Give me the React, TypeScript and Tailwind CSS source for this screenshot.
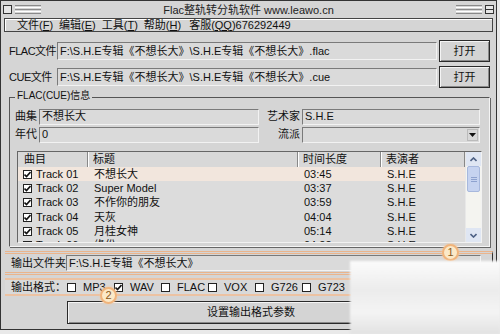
import React from "react";

const tracks = [
  { no: "Track 01", title: "不想长大", time: "03:45", artist: "S.H.E" },
  { no: "Track 02", title: "Super Model", time: "03:37", artist: "S.H.E" },
  { no: "Track 03", title: "不作你的朋友", time: "03:59", artist: "S.H.E" },
  { no: "Track 04", title: "天灰", time: "04:04", artist: "S.H.E" },
  { no: "Track 05", title: "月桂女神", time: "05:14", artist: "S.H.E" },
  { no: "Track 06", title: "缘份", time: "04:22", artist: "S.H.E" },
];

const formats = [
  { name: "MP3", checked: false },
  { name: "WAV", checked: true },
  { name: "FLAC", checked: false },
  { name: "VOX", checked: false },
  { name: "G726", checked: false },
  { name: "G723", checked: false },
];

const inset =
  "border border-t-[#7a7a7a] border-l-[#7a7a7a] border-b-[#f2f2f2] border-r-[#f2f2f2] bg-[#dadada]";

function Field({ value, className = "" }: { value: string; className?: string }) {
  return (
    <div className={`${inset} flex items-center px-[2px] text-[11px] leading-none text-[#111] whitespace-nowrap overflow-hidden ${className}`}>
      {value}
    </div>
  );
}

function Button({ label, className = "" }: { label: string; className?: string }) {
  return (
    <div
      className={`flex items-center justify-center border border-[#2a2a2a] shadow-[inset_1px_1px_0_#f4f4f4,inset_-1px_-1px_0_#8a8a8a] bg-[#d4d4d4] text-[11px] text-[#111] ${className}`}
    >
      {label}
    </div>
  );
}

function Check({ checked }: { checked: boolean }) {
  return (
    <div className="w-[9px] h-[9px] shrink-0 border border-[#222] bg-white flex items-center justify-center">
      {checked && (
        <svg width="7" height="7" viewBox="0 0 7 7">
          <path d="M0.5 3.5 L2.5 5.5 L6.5 1" stroke="#111" strokeWidth="1.6" fill="none" />
        </svg>
      )}
    </div>
  );
}

function Stripes() {
  return (
    <div className="flex flex-col gap-[1px] w-[26px]">
      <div className="h-[1px] bg-[#8a8a8a]" />
      <div className="h-[1px] bg-white" />
      <div className="h-[1px] bg-[#8a8a8a]" />
      <div className="h-[1px] bg-white" />
      <div className="h-[1px] bg-[#8a8a8a]" />
    </div>
  );
}

function Badge({ n }: { n: string }) {
  return (
    <div className="w-[17px] h-[17px] rounded-full border-2 border-[#f0b47c] bg-[#fbe9c8] flex items-center justify-center text-[11px] leading-none text-[#8a5a20] shadow-[0_0_3px_#f3c9a0]">
      {n}
    </div>
  );
}

export default function App() {
  return (
    <div className="relative w-[500px] h-[334px] overflow-hidden bg-[#e9e9e9] font-['Liberation_Sans','Noto_Sans_CJK_SC',sans-serif]">
      <div className="w-[497px] h-[330px] bg-[#d5d5d5] border border-[#333] flex flex-col">
        {/* title bar */}
        <div className="h-[17px] flex items-center px-[2px] gap-[3px]">
          <div className="w-[9px] h-[9px] border border-[#333] bg-[#e6e6e6]" />
          <Stripes />
          <div className="flex-1 text-center text-[11px] text-[#222] leading-none pt-[2px]">
            Flac整轨转分轨软件 www.leawo.cn
          </div>
          <Stripes />
          <div className="w-[9px] h-[9px] border border-[#333] bg-[#e6e6e6] flex items-center">
            <div className="w-full h-[1px] bg-[#333]" />
          </div>
        </div>

        {/* menu bar */}
        <div className="mx-[3px] h-[14px] border border-[#444] shadow-[inset_1px_1px_0_#fff] flex items-center gap-[6px] pl-[12px] text-[11px] leading-none text-[#111]">
          <span>文件(<u>F</u>)</span>
          <span>编辑(<u>E</u>)</span>
          <span>工具(<u>T</u>)</span>
          <span>帮助(<u>H</u>)</span>
          <span className="ml-[2px]">客服(<u>QQ</u>)676292449</span>
        </div>

        {/* file rows */}
        <div className="mt-[8px] pl-[8px] pr-[4px] flex flex-col gap-[4px]">
          <div className="flex items-center h-[22px]">
            <span className="w-[48px] whitespace-nowrap text-[11px] text-[#111] tracking-[-0.5px]">FLAC文件</span>
            <Field className="w-[380px] h-[18px]" value="F:\S.H.E专辑《不想长大》\S.H.E专辑《不想长大》.flac" />
            <Button label="打开" className="ml-[2px] w-[51px] h-[22px]" />
          </div>
          <div className="flex items-center h-[22px]">
            <span className="w-[48px] whitespace-nowrap text-[11px] text-[#111] tracking-[-0.5px]">CUE文件</span>
            <Field className="w-[380px] h-[18px]" value="F:\S.H.E专辑《不想长大》\S.H.E专辑《不想长大》.cue" />
            <Button label="打开" className="ml-[2px] w-[51px] h-[22px]" />
          </div>
        </div>

        {/* group box */}
        <div className="relative mt-[9px] ml-[8px] w-[481px] h-[150px] border border-t-[#555] border-l-[#555] border-b-[#f5f5f5] border-r-[#f5f5f5] shadow-[1px_1px_0_#666]">
          <span className="absolute -top-[7px] left-[5px] bg-[#d5d5d5] px-[2px] text-[10px] leading-none text-[#111]">
            FLAC(CUE)信息
          </span>
          <div className="pt-[10px] pl-[5px] pr-[8px] flex flex-col gap-[1px]">
            <div className="flex items-center h-[17px]">
              <span className="w-[24px] text-[11px] text-[#111]">曲集</span>
              <Field className="w-[220px] h-[16px]" value="不想长大" />
              <span className="w-[43px] text-right pr-[2px] text-[11px] text-[#111]">艺术家</span>
              <Field className="w-[178px] h-[16px]" value="S.H.E" />
            </div>
            <div className="flex items-center h-[17px]">
              <span className="w-[24px] text-[11px] text-[#111]">年代</span>
              <Field className="w-[220px] h-[16px]" value="0" />
              <span className="w-[43px] text-right pr-[2px] text-[11px] text-[#111]">流派</span>
              <div className={`${inset} w-[178px] h-[16px] flex justify-end items-center pr-[1px]`}>
                <div className="w-[11px] h-[12px] bg-[#d8d8d8] border border-[#bbb] flex items-center justify-center">
                  <svg width="7" height="4" viewBox="0 0 7 4">
                    <path d="M0 0 H7 L3.5 4 Z" fill="#111" />
                  </svg>
                </div>
              </div>
            </div>
          </div>

          {/* track list */}
          <div className="mt-[8px] ml-[7px] w-[465px] h-[92px] border border-t-[#666] border-l-[#666] border-b-[#f2f2f2] border-r-[#f2f2f2] bg-[#dcdcdc] flex overflow-hidden">
            <div className="flex-1 flex flex-col overflow-hidden">
              <div className="h-[15px] shrink-0 flex text-[11px] leading-none text-[#111] bg-[#d8d8d8]">
                <div className="w-[70px] pl-[6px] flex items-center border-r border-[#888] shadow-[1px_0_0_#fff]">曲目</div>
                <div className="w-[210px] pl-[5px] flex items-center border-r border-[#888] shadow-[1px_0_0_#fff]">标题</div>
                <div className="w-[83px] pl-[5px] flex items-center border-r border-[#888] shadow-[1px_0_0_#fff]">时间长度</div>
                <div className="flex-1 pl-[5px] flex items-center border-r border-[#888]">表演者</div>
              </div>
              {tracks.map((t, i) => (
                <div
                  key={t.no}
                  className={`h-[14.3px] shrink-0 flex items-center text-[11px] leading-none text-[#111] ${i === 0 ? "bg-[#f2e6dd]" : ""}`}
                >
                  <div className="w-[70px] pl-[5px] flex items-center gap-[4px]">
                    <Check checked />
                    <span>{t.no}</span>
                  </div>
                  <div className="w-[210px] pl-[6px]">{t.title}</div>
                  <div className="w-[83px] pl-[6px]">{t.time}</div>
                  <div className="flex-1 pl-[6px]">{t.artist}</div>
                </div>
              ))}
            </div>
            {/* scrollbar */}
            <div className="w-[16px] bg-[#f4f4f0] flex flex-col border-l border-[#e8e8e8]">
              <div className="h-[14px] flex items-center justify-center bg-[#dfe6f3]">
                <svg width="7" height="5" viewBox="0 0 7 5">
                  <path d="M0.5 4 L3.5 1 L6.5 4" stroke="#4d6185" strokeWidth="1.6" fill="none" />
                </svg>
              </div>
              <div className="mx-[1px] h-[26px] bg-[#c6d3f0] border border-[#a7b8dd] rounded-[2px] flex flex-col justify-center items-center gap-[1px]">
                <div className="w-[6px] h-[1px] bg-[#8ea2cf]" />
                <div className="w-[6px] h-[1px] bg-[#8ea2cf]" />
                <div className="w-[6px] h-[1px] bg-[#8ea2cf]" />
              </div>
              <div className="flex-1" />
              <div className="h-[14px] flex items-center justify-center bg-[#dfe6f3]">
                <svg width="7" height="5" viewBox="0 0 7 5">
                  <path d="M0.5 1 L3.5 4 L6.5 1" stroke="#4d6185" strokeWidth="1.6" fill="none" />
                </svg>
              </div>
            </div>
          </div>
        </div>

        {/* output folder */}
        <div className="relative mt-[4px] ml-[4px] w-[488px] h-[24px] border-y-[3px] border-double border-[#eab48c] border-r border-r-[#333] flex items-center pl-[6px]">
          <span className="w-[55px] whitespace-nowrap text-[11px] text-[#111]">输出文件夹</span>
          <Field className="w-[415px] h-[16px]" value="F:\S.H.E专辑《不想长大》" />
          <div className="absolute -top-[10px] left-[437px]">
            <Badge n="1" />
          </div>
        </div>

        {/* output format */}
        <div className="relative mt-[3px] ml-[4px] w-[346px] h-[18px] border-y-2 border-[#ecc2a2] bg-[#d9d9d9] flex items-center pl-[6px]">
          <span className="w-[56px] whitespace-nowrap text-[11px] text-[#111]">输出格式：</span>
          <div className="flex items-center">
            {formats.map((f) => (
              <div key={f.name} className="w-[47px] flex items-center gap-[7px] text-[11px] text-[#111]">
                <Check checked={f.checked} />
                <span>{f.name}</span>
              </div>
            ))}
          </div>
          <div className="absolute top-[7px] left-[95px]">
            <Badge n="2" />
          </div>
        </div>

        <Button label="设置输出格式参数" className="mt-[5px] ml-[66px] w-[368px] h-[23px]" />
      </div>

      {/* watermark blur overlay */}
      <div className="absolute left-[350px] top-[261px] w-[150px] h-[73px] bg-[linear-gradient(180deg,#fbfbfb_0%,#ececec_40%,#f4f4f4_70%,#e2e2e2_100%)] blur-[1px]" />
    </div>
  );
}
